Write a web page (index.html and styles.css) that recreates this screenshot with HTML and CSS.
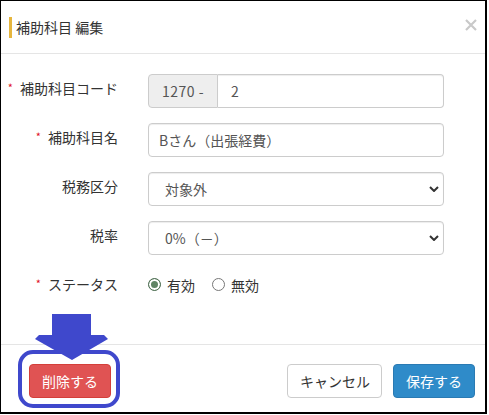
FILE: index.html
```html
<!DOCTYPE html>
<html lang="ja">
<head>
<meta charset="utf-8">
<title>補助科目 編集</title>
<link rel="stylesheet" href="styles.css">
</head>
<body>
<div class="frame">
  <div class="modal-header">
    <h4 class="modal-title">補助科目 編集</h4>
    <button class="close" type="button" aria-label="閉じる">
      <svg width="12" height="12" viewBox="0 0 12 12"><path d="M1 1L11 11M11 1L1 11" stroke="#c9c9c9" stroke-width="2.2" fill="none"/></svg>
    </button>
  </div>
  <div class="modal-body">
    <div class="form-row">
      <label class="form-label"><span class="req">*</span>補助科目コード</label>
      <div class="input-group">
        <span class="addon">1270 -</span>
        <input class="form-control grouped" type="text" value="2">
      </div>
    </div>
    <div class="form-row">
      <label class="form-label"><span class="req">*</span>補助科目名</label>
      <input class="form-control name" type="text" value="Bさん（出張経費）">
    </div>
    <div class="form-row">
      <label class="form-label">税務区分</label>
      <select class="form-control select"><option>対象外</option></select>
    </div>
    <div class="form-row">
      <label class="form-label">税率</label>
      <select class="form-control select"><option>0%（－）</option></select>
    </div>
    <div class="form-row last">
      <label class="form-label"><span class="req">*</span>ステータス</label>
      <div class="radios">
        <label class="radio"><span class="dot checked"></span>有効</label>
        <label class="radio"><span class="dot"></span>無効</label>
      </div>
    </div>
  </div>
  <div class="modal-footer">
    <button class="btn btn-danger" type="button">削除する</button>
    <div class="footer-right">
      <button class="btn btn-default" type="button">キャンセル</button>
      <button class="btn btn-primary" type="button">保存する</button>
    </div>
  </div>
  <svg class="annotation" width="130" height="110" viewBox="0 305 130 110">
    <rect x="20" y="352" width="98" height="54" rx="13" ry="13" fill="none" stroke="#3f48cc" stroke-width="4"/>
    <polygon points="52,314 91,314 91,335 104,335 108,339 72,360 35,339 39,335 52,335" fill="#3f48cc"/>
  </svg>
</div>
</body>
</html>
```
FILE: styles.css
```css
* { box-sizing: border-box; }
html, body { margin: 0; padding: 0; background: #fff; }
body {
  font-family: "Noto Sans CJK JP", "Noto Sans", sans-serif;
  font-size: 14px;
  color: #333;
}
.frame {
  position: relative;
  width: 487px;
  height: 414px;
  border-left: 1px solid #000;
  border-top: 1px solid #000;
  border-right: 2px solid #000;
  border-bottom: 2px solid #000;
  background: #fff;
}
.modal-header {
  display: flex;
  align-items: center;
  height: 53px;
  padding: 0 8px 0 8px;
  border-bottom: 1px solid #e5e5e5;
}
.modal-title {
  margin: 0;
  font-size: 14px;
  font-weight: normal;
  line-height: 21px;
  border-left: 3px solid #e6b63e;
  padding-left: 4px;
  color: #333;
}
.close {
  margin-left: auto;
  border: 0;
  background: none;
  padding: 0;
  width: 12px;
  height: 12px;
  display: block;
  margin-top: -4px;
}
.close svg { display: block; }
.modal-body {
  padding: 20px 14px 40px 4px;
}
.form-row {
  display: grid;
  grid-template-columns: 113px 296px;
  column-gap: 30px;
  margin-bottom: 15px;
  height: 34px;
}
.form-row.last { margin-bottom: 0; }
.form-label {
  text-align: right;
  padding-top: 4px;
  line-height: 20px;
  white-space: nowrap;
  color: #333;
}
.req {
  color: #e0102a;
  font-size: 11px;
  margin-right: 7px;
  position: relative;
  top: -2px;
}
.input-group { display: flex; height: 34px; }
.addon {
  width: 70px;
  flex: none;
  background: #eee;
  border: 1px solid #ccc;
  border-radius: 4px 0 0 4px;
  padding: 0 0 0 13px;
  line-height: 32px;
  color: #555;
  white-space: nowrap;
  letter-spacing: 0.5px;
}
.form-control {
  display: block;
  width: 100%;
  height: 34px;
  border: 1px solid #ccc;
  border-radius: 4px;
  padding: 0 12px;
  font-family: inherit;
  font-size: 14px;
  color: #555;
  background: #fff;
  box-shadow: inset 0 1px 1px rgba(0,0,0,.075);
  outline: none;
}
.form-control.grouped {
  border-left: 0;
  border-radius: 0 4px 4px 0;
  padding-left: 13px;
}
.form-control.name { padding-left: 10px; }
.select {
  appearance: none;
  -webkit-appearance: none;
  padding-left: 16px;
  background-image: url("data:image/svg+xml;utf8,<svg xmlns='http://www.w3.org/2000/svg' width='10' height='6' viewBox='0 0 10 6'><path d='M1 1L5 5L9 1' fill='none' stroke='%23333' stroke-width='2'/></svg>");
  background-repeat: no-repeat;
  background-position: right 4px center;
  background-size: 10px 6px;
}
.radios {
  display: flex;
  align-items: center;
  height: 30px;
  line-height: 20px;
}
.radio {
  display: flex;
  align-items: center;
  color: #333;
  margin-right: 17px;
}
.dot {
  width: 13px;
  height: 13px;
  border-radius: 50%;
  border: 1px solid #777;
  background: #fff;
  margin-right: 6px;
  margin-top: -1px;
}
.dot.checked {
  border: 1px solid #4e6e53;
  background: #5f8464;
  box-shadow: inset 0 0 0 2px #fff;
}
.modal-footer {
  display: flex;
  align-items: flex-start;
  border-top: 1px solid #e5e5e5;
  padding: 19px 10px 0 28px;
}
.footer-right {
  margin-left: auto;
  display: flex;
  gap: 11px;
}
.btn {
  height: 34px;
  padding: 0 12px;
  border: 1px solid transparent;
  border-radius: 4px;
  font-family: inherit;
  font-size: 14px;
  line-height: 32px;
  white-space: nowrap;
}
.btn-danger { background: #e05353; border-color: #d43f3a; color: #fff; width: 82px; }
.btn-default { background: #fff; border-color: #ccc; color: #333; width: 95px; }
.btn-primary { background: #2f8bc9; border-color: #2a7ab3; color: #fff; width: 82px; }
.annotation {
  position: absolute;
  left: -1px;
  top: 304px;
  pointer-events: none;
}
```
